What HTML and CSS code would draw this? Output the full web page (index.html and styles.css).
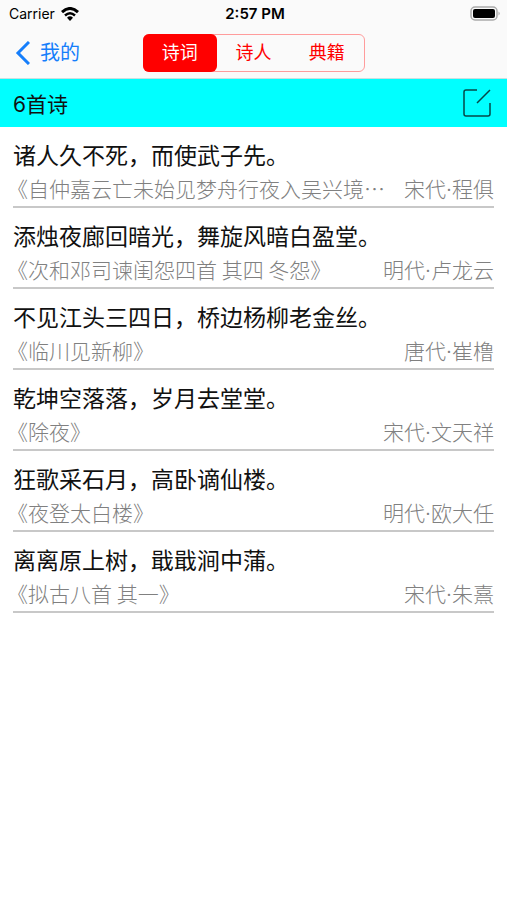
FILE: index.html
```
<!DOCTYPE html>
<html lang="zh-CN">
  <head>
    <meta charset="UTF-8" />
    <meta name="viewport" content="width=device-width, initial-scale=1.0" />
    <title>我的诗词</title>
    <link rel="stylesheet" href="styles.css">
  </head>
  <body>
    <header>
      <div class="status-bar">
        <div class="carrier">
          <span>Carrier</span>
          <svg width="18" height="14" viewBox="0 0 18 14" fill="none" stroke="#000" stroke-width="3">
            <path d="M1 5.200Q9 -2.200 17 5.200" />
            <path d="M4 8.500Q9 4 14 8.500" stroke-width="2.500" />
            <path d="M6 10.700Q9 8 12 10.700L9 14Z" fill="#000" stroke="none" />
          </svg>
        </div>
        <span class="time">2:57 PM</span>
        <svg class="battery" width="31" height="16" viewBox="0 0 31 16">
          <rect x="1" y="1" width="26" height="13" rx="4" fill="#fafafa" stroke="#aaa" stroke-width="1.500" />
          <rect x="3" y="3" width="22" height="9" rx="2" fill="#000" />
          <path d="M28.500 5.500Q31 7.500 28.500 9.500Z" fill="#aaa" />
        </svg>
      </div>
      <nav class="nav-bar">
        <a class="back" href="#">
          <svg width="15" height="24" viewBox="0 0 15 24" fill="none" stroke="#157efb" stroke-width="3">
            <path d="M14 1L3 12L14 23" />
          </svg>
          <span>我的</span>
        </a>
        <div class="segments">
          <button class="active">诗词</button>
          <button>诗人</button>
          <button>典籍</button>
        </div>
      </nav>
    </header>

    <div class="section">
      <h1>6首诗</h1>
      <button class="edit" aria-label="编辑">
        <svg width="28" height="28" viewBox="0 0 28 28" fill="none" stroke="#064848" stroke-width="1.500">
          <path d="M14 1H3Q1 1 1 3V25Q1 27 3 27H25Q27 27 27 25V14M14 14L27 1" />
        </svg>
      </button>
    </div>

    <ul class="poems">
      <li>
        <p class="verse">诸人久不死，而使武子先。</p>
        <div class="info">
          <span class="title">《自仲嘉云亡未始见梦舟行夜入吴兴境…</span>
          <span class="author">宋代·程俱</span>
        </div>
      </li>
      <li>
        <p class="verse">添烛夜廊回暗光，舞旋风暗白盈堂。</p>
        <div class="info">
          <span class="title">《次和邓司谏闺怨四首 其四 冬怨》</span>
          <span class="author">明代·卢龙云</span>
        </div>
      </li>
      <li>
        <p class="verse">不见江头三四日，桥边杨柳老金丝。</p>
        <div class="info">
          <span class="title">《临川见新柳》</span>
          <span class="author">唐代·崔橹</span>
        </div>
      </li>
      <li>
        <p class="verse">乾坤空落落，岁月去堂堂。</p>
        <div class="info">
          <span class="title">《除夜》</span>
          <span class="author">宋代·文天祥</span>
        </div>
      </li>
      <li>
        <p class="verse">狂歌采石月，高卧谪仙楼。</p>
        <div class="info">
          <span class="title">《夜登太白楼》</span>
          <span class="author">明代·欧大任</span>
        </div>
      </li>
      <li>
        <p class="verse">离离原上树，戢戢涧中蒲。</p>
        <div class="info">
          <span class="title">《拟古八首 其一》</span>
          <span class="author">宋代·朱熹</span>
        </div>
      </li>
    </ul>
  </body>
</html>
```
FILE: styles.css
```
* {
  box-sizing: border-box;
}
body {
  margin: 0;
  background: white;
  color: #111;
  font-family: Inter, "Noto Sans CJK SC", sans-serif;
}
button {
  padding: 0;
  border: none;
  background: none;
  font-family: inherit;
  cursor: pointer;
}
svg {
  display: block;
}
header {
  background: #fafafa;
  border-bottom: 1px solid #c8e0e0;
}
.status-bar {
  display: grid;
  grid-template-columns: 1fr auto 1fr;
  align-items: center;
  height: 27px;
  padding: 0 6px 0 9px;
  font-size: 14px;
  color: #000;
}
.carrier {
  display: flex;
  align-items: center;
  gap: 6px;
}
.time {
  font-size: 15px;
  font-weight: 600;
}
.battery {
  justify-self: end;
}
.nav-bar {
  display: grid;
  grid-template-columns: 1fr 222px 1fr;
  align-items: center;
  height: 51px;
  padding: 0 15px;
}
.back {
  display: flex;
  align-items: center;
  gap: 10px;
  color: #157efb;
  font-size: 20px;
  line-height: 30px;
  text-decoration: none;
}
.segments {
  display: grid;
  grid-template-columns: repeat(3, 1fr);
  height: 38px;
  border: 1px solid #ff9c9c;
  border-radius: 6px;
}
.segments button {
  color: #f00;
  font-size: 18px;
  line-height: 24px;
}
.segments .active {
  margin: -1px 0 -1px -1px;
  border-radius: 6px;
  background: #f00;
  color: white;
}
.section {
  display: flex;
  align-items: center;
  justify-content: space-between;
  height: 48px;
  padding: 0 16px 0 13px;
  background: #0ff;
}
h1 {
  margin: 0;
  font-size: 21px;
  font-weight: 400;
}
.poems {
  margin: 0;
  padding: 0 13px;
  list-style: none;
}
.poems li {
  padding: 13px 0 3px;
  border-bottom: 2px solid #c8c8c8;
}
.verse {
  margin: 0;
  font-size: 23px;
  line-height: 33px;
}
.info {
  display: flex;
  align-items: baseline;
  justify-content: space-between;
  margin-left: -6px;
  color: #808080;
  font-size: 21px;
  font-weight: 300;
  line-height: 30px;
  white-space: nowrap;
}
.title {
  min-width: 0;
  overflow: hidden;
  font-family: "Noto Sans CJK SC", sans-serif;
  text-overflow: ellipsis;
}
.author {
  flex-shrink: 0;
  line-height: 24px;
}
```
